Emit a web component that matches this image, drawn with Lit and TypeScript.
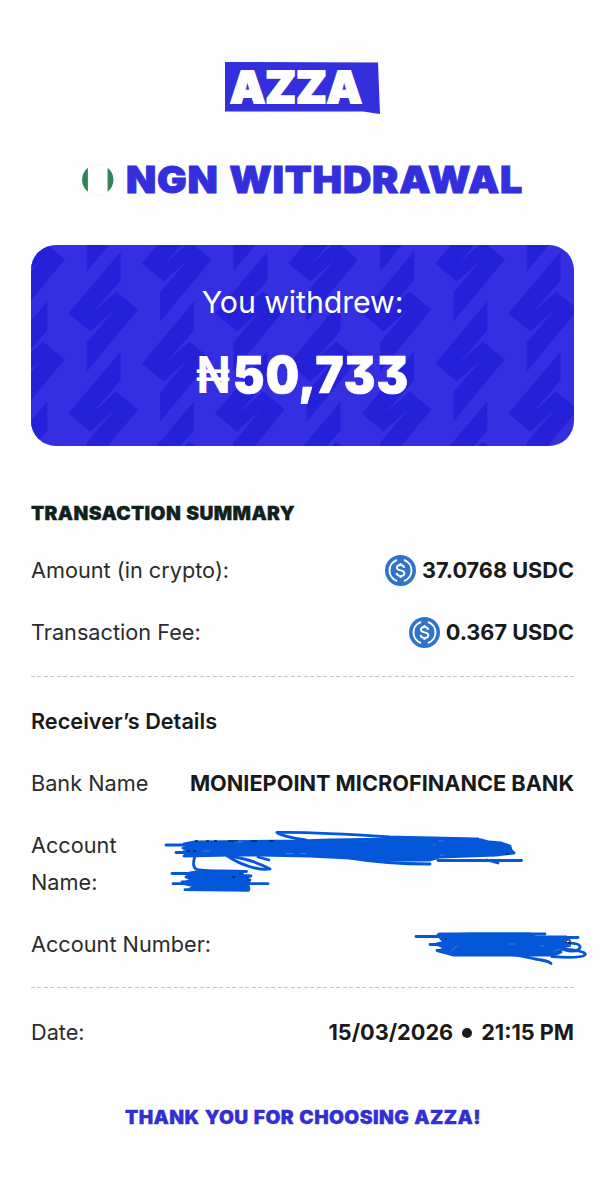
import { LitElement, html, svg, css } from "lit";
import { customElement, property } from "lit/decorators.js";

@customElement("usdc-icon")
class UsdcIcon extends LitElement {
  static styles = css`
    :host { display: block; width: 31px; height: 31px; }
    svg { display: block; }
  `;
  render() {
    return html`<svg width="31" height="31" viewBox="0 0 32 32">
      <circle cx="16" cy="16" r="16" fill="#2f74c8" />
      <g fill="none" stroke="#fff" stroke-width="2">
        <path d="M12.4 5.200a11.400 11.400 0 0 0 0 21.600M19.600 5.200a11.400 11.400 0 0 1 0 21.600" />
        <path d="M19.800 13.200c-.2-1.800-1.600-2.800-3.800-2.800-2.300 0-3.700 1-3.700 2.700 0 4.100 7.700 1.500 7.700 5.700 0 1.800-1.600 2.800-4 2.800s-3.900-1.100-4-3M16 8.200v2.200M16 21.600v2.200" />
      </g>
    </svg>`;
  }
}

@customElement("display-text")
class DisplayText extends LitElement {
  @property() text = "";
  @property({ type: Number }) size = 20;
  @property({ type: Number }) width = 100;
  @property({ type: Number }) weight = 0;
  static styles = css`
    :host { display: block; }
    svg { display: block; overflow: visible; }
    text {
      font-family: Inter, sans-serif;
      font-weight: 900;
      font-feature-settings: "cv09";
      letter-spacing: 0.02em;
      word-spacing: 0.05em;
      fill: currentColor;
      stroke: currentColor;
      stroke-linejoin: miter;
    }
  `;
  render() {
    const cap = this.size * 0.727;
    return html`<svg width=${this.width} height=${cap}>
      <text x="0" y=${cap} font-size=${this.size} stroke-width=${this.weight}
        textLength=${this.width} lengthAdjust="spacingAndGlyphs">${this.text}</text>
    </svg>`;
  }
}

const BOLT = "17.300,-60 -34.700,2 -13,20 12,-2.500 -16.500,31 -16.500,60 34.700,-2 13,-20 -12,2.500 17.300,-31";

@customElement("amount-card")
class AmountCard extends LitElement {
  static styles = css`
    :host {
      display: grid;
      width: 543px;
      height: 201px;
      border-radius: 25px;
      overflow: hidden;
      background: #342fe0;
      color: #fff;
    }
    .pattern, .content { grid-area: 1 / 1; }
    .pattern { display: block; }
    .content {
      display: flex;
      flex-direction: column;
      align-items: center;
      padding-top: 38px;
      z-index: 1;
    }
    .label {
      font: 400 30.3px/38px Inter, sans-serif;
      letter-spacing: -0.1px;
      margin-bottom: 35px;
    }
    .amount { display: flex; gap: 4px; }
    .naira { font: 700 51px/37px Inter, sans-serif; width: 32px; }
    .naira svg { display: block; overflow: visible; }
  `;
  render() {
    const bolts = [];
    for (let col = -1; col < 8; col++) {
      for (let row = -1; row < 3; row++) {
        const x = 72.3 + col * 73.33;
        const y = 66.5 + row * 100 - (col % 2 ? 50 : 0);
        bolts.push(svg`<polygon points=${BOLT} transform="translate(${x} ${y})" />`);
      }
    }
    return html`
      <svg class="pattern" width="543" height="201" fill="#2421d9">${bolts}</svg>
      <div class="content">
        <div class="label">You withdrew:</div>
        <div class="amount">
          <div class="naira"><svg width="32" height="37">
            <text x="-1" y="37.100" fill="#fff" textLength="34" lengthAdjust="spacingAndGlyphs">₦</text>
          </svg></div>
          <display-text text="50,733" size="51" width="176" weight="0.7"></display-text>
        </div>
      </div>`;
  }
}

@customElement("receipt-row")
class ReceiptRow extends LitElement {
  @property() label = "";
  static styles = css`
    :host {
      display: flex;
      justify-content: space-between;
      align-items: center;
      font: 400 21.7px/37.5px Inter, sans-serif;
      color: #2c2c2c;
      white-space: pre-line;
    }
    .value {
      display: flex;
      align-items: center;
      gap: 6px;
      font-weight: 650;
      color: #1a1a1a;
      white-space: nowrap;
    }
  `;
  render() {
    return html`<span>${this.label}</span><div class="value"><slot></slot></div>`;
  }
}

@customElement("app-root")
class AppRoot extends LitElement {
  static styles = css`
    :host {
      display: flex;
      flex-direction: column;
      position: relative;
      box-sizing: border-box;
      width: 605px;
      height: 1200px;
      padding: 62px 31px 0;
      background: #fefefe;
      font-family: Inter, sans-serif;
      overflow: hidden;
    }
    .logo { display: block; align-self: center; width: 155px; height: 52px; overflow: visible; }
    .logo text { font: 900 43.500px/1 Inter, sans-serif; fill: #fff; stroke: #fff; stroke-width: 1.8px; }
    .title {
      display: flex;
      align-items: center;
      gap: 12.500px;
      height: 32px;
      margin: 50px 0 49px 51px;
      color: #342fdc;
    }
    .flag { display: block; }
    .heading { margin: 60.500px 0 32.300px; color: #10211e; }
    .rows { display: flex; flex-direction: column; gap: 24.5px; }
    .divider {
      height: 1px;
      margin: -0.6px 0 1.500px;
      background: repeating-linear-gradient(90deg, #c6c6c6 0 4px, transparent 4px 6.5px);
    }
    .receiver { font: 600 21.7px/37.5px Inter, sans-serif; color: #1a1a1a; }
    .dot { width: 10px; height: 10px; border-radius: 50%; background: #1a1a1a; margin: 0 3px; }
    .thanks { align-self: center; margin-top: 59px; color: #342fd0; }
    .scribble { position: absolute; left: 0; top: 820px; }
  `;
  render() {
    return html`
      <svg class="logo" viewBox="0 0 155 52">
        <path d="M0 0L153 .5 155 52 138 49.500H0z" fill="#342fdc" />
        <text x="5" y="40.500" textLength="132" lengthAdjust="spacingAndGlyphs">AZZA</text>
      </svg>
      <div class="title">
        <svg class="flag" width="31.500" height="31.500" viewBox="0 0 32 32">
          <circle cx="16" cy="16" r="15.500" fill="#fff" stroke="#eee" stroke-width=".6" />
          <path d="M6 3.700a15.700 15.700 0 0 0 0 24.600zM26 3.700a15.700 15.700 0 0 1 0 24.600z" fill="#358259" />
        </svg>
        <display-text text="NGN WITHDRAWAL" size="36.300" width="397" weight="0.9"></display-text>
      </div>
      <amount-card></amount-card>
      <display-text class="heading" text="TRANSACTION SUMMARY" size="18.400" width="264" weight="0.3"></display-text>
      <div class="rows">
        <receipt-row label="Amount (in crypto):"><usdc-icon></usdc-icon><span>37.0768 USDC</span></receipt-row>
        <receipt-row label="Transaction Fee:"><usdc-icon></usdc-icon><span>0.367 USDC</span></receipt-row>
        <div class="divider"></div>
        <div class="receiver">Receiver’s Details</div>
        <receipt-row label="Bank Name"><span>MONIEPOINT MICROFINANCE BANK</span></receipt-row>
        <receipt-row label=${"Account\nName:"}></receipt-row>
        <receipt-row label="Account Number:"></receipt-row>
        <div class="divider"></div>
        <receipt-row label="Date:"><span>15/03/2026</span><span class="dot"></span><span>21:15 PM</span></receipt-row>
      </div>
      <display-text class="thanks" text="THANK YOU FOR CHOOSING AZZA!" size="18.200" width="356" weight="0.3"></display-text>
      <svg class="scribble" width="605" height="150" viewBox="0 820 605 150" fill="none"
        stroke="#0457d9" stroke-width="2.800" stroke-linecap="round" stroke-linejoin="round">
        <path fill="#0457d9" d="M184 844L195 842 300 841 330 840 400 839 437 839 482 840 489 842 501 843 510 846 511 850 514 853 496 855 440 857 430 860 390 860 350 858 310 856 260 855 230 855 184 856 189 853 183 852 189 850 183 848 191 846z" />
        <path d="M166 845H188M176 852.500H195M306 840C290 838 278 834 277 832.500 300 832 345 834 390 837 420 838 455 838 478 839M350 858C380 863 405 864 430 864M438 860.500H521.500M487 860L498 863" />
        <path d="M195 856C193 862 193 867 196 869 202 872 225 870 246.500 871.500M227 856C245 858 261 864 270 869 260 871 241 865 229 857M258 857L269 860" />
        <path fill="#0457d9" d="M190 873L197 872H242L243 876 249 876 246 879 249 882 248 885 249 889 190 889 194 886 185 884 188 881 194 880 187 877z" />
        <path d="M172 873.500H200M186 877L251 876M182 882L250 880M173 883.700H268M185 889.700L248.500 890.300" />
        <path fill="#0457d9" d="M438 935L475 934H530L535 937H566L563 941 568 946 559 948 561 952 554 955H453L438 951 446 948 436 944 444 942z" />
        <path d="M416 936.500H438M439 934H545M535 937.500H578M430 944.500H460M437 950.500H460M452 954.500H512C525 956 533 959 541 960 547 961 550 962 551 963.500M552 956.700C570 958 581 958 585 955 587 952 577 950 561 949M566 938C550 944 562 951 573 951 581 950 582 946 577 944 568 942 560 944 554 949" />
        <path stroke="#10274e" stroke-width="1.300" stroke-linecap="butt" d="M195 841H198M206 841H209M214 841H217M228 841H238M251 841H257M269 841H274M187 851H190M193 851H196M239 873.500H242M232 877H235M248 878V881M445 939H447M505 854.500L509 854M566 943V940H570V947M568 943H571" />
        <path stroke="#5791e5" stroke-width=".7" d="M203 851H210M235 842H242M286 853.500H293M301 853.500H306M433 845L435 844M439 841H443M440 855H444M457 946L451 951M510 944H514M540 946H544M554 951L560 949" />
      </svg>`;
  }
}
